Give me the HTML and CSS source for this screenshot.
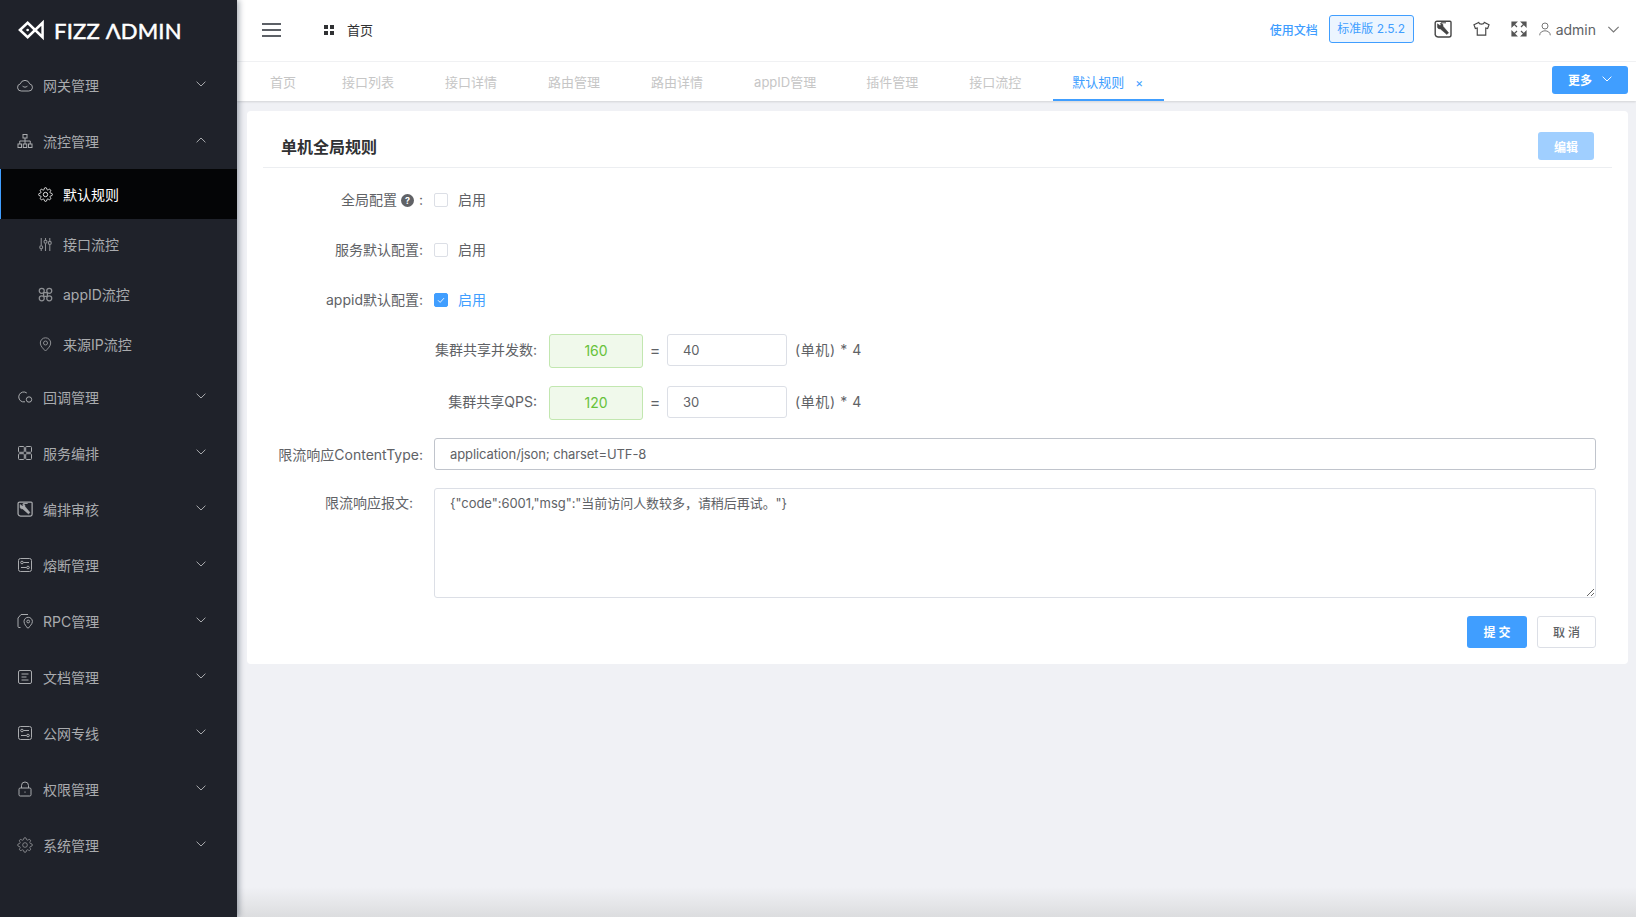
FILE: index.html
```html
<!DOCTYPE html>
<html lang="zh-CN">
  <head>
    <meta charset="utf-8">
    <title>Fizz Admin</title>
    <link rel="stylesheet" href="styles.css">
  </head>
  <body>
  <svg class="defs" width="0" height="0">
    <symbol id="i-down" viewBox="0 0 10 6"><path d="M.6.7 5 5 9.4.7"/></symbol>
    <symbol id="i-up" viewBox="0 0 10 6"><path d="M.6 5.3 5 1l4.4 4.3"/></symbol>
    <symbol id="i-cloud" viewBox="0 0 16 16"><path d="M4.2 14h7.6a3.6 3.6 0 0 0 .9-7.1A4.9 4.9 0 0 0 3.300 6.900 3.600 3.600 0 0 0 4.200 14z"/><path d="M5.500 8.800c.6 1.800 4.400 1.800 5 0"/></symbol>
    <symbol id="i-tree" viewBox="0 0 16 16"><rect x="6" y="1.500" width="4" height="3.500"/><rect x="1" y="11" width="3.500" height="3.500"/><rect x="6.250" y="11" width="3.500" height="3.500"/><rect x="11.500" y="11" width="3.500" height="3.500"/><path d="M8 5v6M2.750 11V8h10.500v3"/></symbol>
    <symbol id="i-gear" viewBox="0 0 24 24"><circle cx="12" cy="12" r="3.500"/><path d="M19.400 15a1.650 1.650 0 0 0 .33 1.820l.06.06a2 2 0 0 1 0 2.830 2 2 0 0 1-2.830 0l-.06-.06a1.650 1.650 0 0 0-1.820-.33 1.650 1.650 0 0 0-1 1.510V21a2 2 0 0 1-2 2 2 2 0 0 1-2-2v-.09A1.650 1.650 0 0 0 9 19.400a1.650 1.650 0 0 0-1.820.33l-.06.06a2 2 0 0 1-2.830 0 2 2 0 0 1 0-2.830l.06-.06a1.650 1.650 0 0 0 .33-1.820 1.650 1.650 0 0 0-1.510-1H3a2 2 0 0 1-2-2 2 2 0 0 1 2-2h.09A1.650 1.650 0 0 0 4.600 9a1.650 1.650 0 0 0-.33-1.820l-.06-.06a2 2 0 0 1 0-2.830 2 2 0 0 1 2.830 0l.06.06a1.650 1.650 0 0 0 1.820.33H9a1.650 1.650 0 0 0 1-1.510V3a2 2 0 0 1 2-2 2 2 0 0 1 2 2v.09a1.650 1.650 0 0 0 1 1.510 1.650 1.650 0 0 0 1.820-.33l.06-.06a2 2 0 0 1 2.830 0 2 2 0 0 1 0 2.830l-.06.06a1.650 1.650 0 0 0-.33 1.820V9a1.650 1.650 0 0 0 1.510 1H21a2 2 0 0 1 2 2 2 2 0 0 1-2 2h-.09a1.650 1.650 0 0 0-1.510 1z"/></symbol>
    <symbol id="i-sliders" viewBox="0 0 12 14"><path d="M2 1v7M2 11v2M6 1v2M6 6v7M10 1v3M10 7v6"/><circle cx="2" cy="9.500" r="1.400"/><circle cx="6" cy="4.500" r="1.400"/><circle cx="10" cy="5.500" r="1.400"/></symbol>
    <symbol id="i-cmd" viewBox="0 0 12 12"><circle cx="3" cy="3" r="2"/><circle cx="9" cy="3" r="2"/><circle cx="3" cy="9" r="2"/><circle cx="9" cy="9" r="2"/><path d="M4.500 4.500h3v3h-3z"/></symbol>
    <symbol id="i-pin" viewBox="0 0 12 15"><path d="M6 14C3.500 11.500 .8 9 .8 6a5.200 5.200 0 0 1 10.400 0C11.200 9 8.500 11.500 6 14z"/><circle cx="6" cy="6" r="2"/></symbol>
    <symbol id="i-callback" viewBox="0 0 16 16"><path d="M9.800 4A5 5 0 1 0 5.500 12.800H8"/><circle cx="12" cy="10.500" r="2.700"/></symbol>
    <symbol id="i-grid" viewBox="0 0 16 16"><rect x="1.500" y="1.500" width="5.800" height="5.800" rx="1"/><rect x="8.700" y="1.500" width="5.800" height="5.800" rx="1"/><rect x="1.500" y="8.700" width="5.800" height="5.800" rx="1"/><rect x="8.700" y="8.700" width="5.800" height="5.800" rx="1"/></symbol>
    <symbol id="i-audit" viewBox="0 0 18 18"><path d="M3 1.200h13a1 1 0 0 1 1 1V15a2 2 0 0 1-2 2H4a3 3 0 0 1-2.800-2.200V3a1.800 1.800 0 0 1 1.800-1.800z" stroke-width="1.400"/><path d="M7 2.800h5" stroke-width="1"/><path d="M3.400 3.800 6 5.600 7 4.800l-.7-1.500c1.800-.2 3 1 2.700 3l5.600 6.500-1.700 1.700-6.500-5.600c-2 .3-3.300-1-3-3z" fill="currentColor" stroke-width=".5"/></symbol>
    <symbol id="i-switch" viewBox="0 0 16 16"><rect x="1.500" y="1.500" width="13" height="13" rx="2"/><path d="M6.500 5.500H12M4 10.500h5.500"/><circle cx="5" cy="5.500" r="1.300"/><circle cx="11" cy="10.500" r="1.300"/></symbol>
    <symbol id="i-rpc" viewBox="0 0 16 16"><path d="M3.500 14.500H2a1 1 0 0 1-1-1V5l3-3.500h7"/><path d="M10.500 15c-1-1.500-3.500-3.800-3.500-6.500a4.200 4.200 0 0 1 8.400 0c0 2.700-3.100 5-3.900 6.500z"/><circle cx="11.200" cy="8.500" r="1.400"/></symbol>
    <symbol id="i-doc" viewBox="0 0 16 16"><rect x="1.500" y="1.500" width="13" height="13" rx="1.500"/><path d="M4.500 5h7M4.500 8h5M4.500 11h7"/></symbol>
    <symbol id="i-lock" viewBox="0 0 16 16"><rect x="2" y="7" width="12" height="8" rx="1.200"/><path d="M4.500 7V4.500a3.500 3.500 0 0 1 7 0V7M8 10.500v1.200"/></symbol>
    <symbol id="i-shirt" viewBox="0 0 18 16"><path d="M6 1 1 3.500l1.500 4L4.500 7v7.500h9V7l2 .5 1.500-4L12 1c-.5 2.500-5.500 2.500-6 0z"/></symbol>
    <symbol id="i-full" viewBox="0 0 16 16"><path d="M1 1h4.500L1 5.500zM2.500 2.500l3.500 3.500M15 1h-4.500L15 5.500zM13.500 2.500 10 6M1 15h4.500L1 10.500zM2.500 13.500 6 10M15 15h-4.500l4.500-4.500zM13.500 13.500 10 10"/></symbol>
    <symbol id="i-user" viewBox="0 0 12 14"><circle cx="6" cy="4" r="3"/><path d="M.7 13.300c0-6 10.600-6 10.600 0"/></symbol>
  </svg>

  <div class="app">
    <aside class="sidebar">
      <div class="logo">
        <svg class="logo_mark" viewBox="0 0 28 22"><path d="M2 11 10 3.500 25.500 18.500V3.500L10 18.500z" fill="none" stroke="#fff" stroke-width="2.600"/><circle cx="10" cy="11" r="1.400" fill="#fff"/></svg>
        <span class="logo_text">FIZZ ΛDMIN</span>
      </div>
      <div class="menu_group"><svg class="menu_icon"><use href="#i-cloud"/></svg><span>网关管理</span><svg class="menu_arrow"><use href="#i-down"/></svg></div>
      <div class="menu_group"><svg class="menu_icon"><use href="#i-tree"/></svg><span>流控管理</span><svg class="menu_arrow"><use href="#i-up"/></svg></div>
      <div class="menu_item menu_item__active"><svg class="sub_icon"><use href="#i-gear"/></svg><span>默认规则</span></div>
      <div class="menu_item"><svg class="sub_icon"><use href="#i-sliders"/></svg><span>接口流控</span></div>
      <div class="menu_item"><svg class="sub_icon"><use href="#i-cmd"/></svg><span>appID流控</span></div>
      <div class="menu_item"><svg class="sub_icon"><use href="#i-pin"/></svg><span>来源IP流控</span></div>
      <div class="menu_group"><svg class="menu_icon"><use href="#i-callback"/></svg><span>回调管理</span><svg class="menu_arrow"><use href="#i-down"/></svg></div>
      <div class="menu_group"><svg class="menu_icon"><use href="#i-grid"/></svg><span>服务编排</span><svg class="menu_arrow"><use href="#i-down"/></svg></div>
      <div class="menu_group"><svg class="menu_icon"><use href="#i-audit"/></svg><span>编排审核</span><svg class="menu_arrow"><use href="#i-down"/></svg></div>
      <div class="menu_group"><svg class="menu_icon"><use href="#i-switch"/></svg><span>熔断管理</span><svg class="menu_arrow"><use href="#i-down"/></svg></div>
      <div class="menu_group"><svg class="menu_icon"><use href="#i-rpc"/></svg><span>RPC管理</span><svg class="menu_arrow"><use href="#i-down"/></svg></div>
      <div class="menu_group"><svg class="menu_icon"><use href="#i-doc"/></svg><span>文档管理</span><svg class="menu_arrow"><use href="#i-down"/></svg></div>
      <div class="menu_group"><svg class="menu_icon"><use href="#i-switch"/></svg><span>公网专线</span><svg class="menu_arrow"><use href="#i-down"/></svg></div>
      <div class="menu_group"><svg class="menu_icon"><use href="#i-lock"/></svg><span>权限管理</span><svg class="menu_arrow"><use href="#i-down"/></svg></div>
      <div class="menu_group"><svg class="menu_icon"><use href="#i-gear"/></svg><span>系统管理</span><svg class="menu_arrow"><use href="#i-down"/></svg></div>
    </aside>

    <div class="main">
      <header class="topbar">
        <div class="hamburger"><i></i><i></i><i></i></div>
        <div class="crumb">
          <svg class="crumb_icon" viewBox="0 0 12 12"><path d="M1 1h4v4H1zM7 1h4v4H7zM1 7h4v4H1zM7 7h4v4H7z"/></svg>
          <span>首页</span>
        </div>
        <div class="topbar_right">
          <a class="doc_link">使用文档</a>
          <span class="version">标准版 2.5.2</span>
          <svg class="top_icon top_icon__audit"><use href="#i-audit"/></svg>
          <svg class="top_icon top_icon__shirt"><use href="#i-shirt"/></svg>
          <svg class="top_icon top_icon__full"><use href="#i-full"/></svg>
          <svg class="top_user"><use href="#i-user"/></svg>
          <span class="username">admin</span>
          <svg class="top_arrow"><use href="#i-down"/></svg>
        </div>
      </header>

      <nav class="tabs">
        <a class="tab tab__home">首页</a>
        <a class="tab">接口列表</a>
        <a class="tab">接口详情</a>
        <a class="tab">路由管理</a>
        <a class="tab">路由详情</a>
        <a class="tab tab__latin">appID管理</a>
        <a class="tab">插件管理</a>
        <a class="tab">接口流控</a>
        <a class="tab tab__active">默认规则<span class="tab_close">×</span></a>
        <button class="btn btn__primary btn__more">更多<svg class="more_arrow"><use href="#i-down"/></svg></button>
      </nav>

      <section class="card">
        <div class="card_head">
          <h2>单机全局规则</h2>
          <button class="btn btn__edit">编辑</button>
        </div>
        <form class="form">
          <div class="row row__check">
            <label class="row_label">全局配置 <span class="help">?</span> :</label>
            <span class="check"></span><span class="check_text">启用</span>
          </div>
          <div class="row row__check">
            <label class="row_label">服务默认配置:</label>
            <span class="check"></span><span class="check_text">启用</span>
          </div>
          <div class="row row__check">
            <label class="row_label">appid默认配置:</label>
            <span class="check check__on"><svg viewBox="0 0 14 14"><path d="M3.500 7.300 6 9.800l4.500-5"/></svg></span><span class="check_text check_text__on">启用</span>
          </div>
          <div class="row row__calc">
            <label class="row_label row_label__wide">集群共享并发数:</label>
            <span class="total">160</span>
            <span class="equals">=</span>
            <input class="input input__small" value="40">
            <span class="unit">(单机) * 4</span>
          </div>
          <div class="row row__calc">
            <label class="row_label row_label__wide">集群共享QPS:</label>
            <span class="total">120</span>
            <span class="equals">=</span>
            <input class="input input__small" value="30">
            <span class="unit">(单机) * 4</span>
          </div>
          <div class="row">
            <label class="row_label">限流响应ContentType:</label>
            <input class="input input__full input__dark" value="application/json; charset=UTF-8">
          </div>
          <div class="row row__area">
            <label class="row_label row_label__top">限流响应报文:</label>
            <textarea class="textarea">{"code":6001,"msg":"当前访问人数较多，请稍后再试。"}</textarea>
          </div>
          <div class="form_actions">
            <button type="button" class="btn btn__primary btn__submit">提 交</button>
            <button type="button" class="btn btn__cancel">取 消</button>
          </div>
        </form>
      </section>
    </div>
  </div>
</body>
</html>
```

FILE: styles.css
```css
html, body {
  margin: 0; padding: 0;
  height: 100%;
  overflow: hidden;
  font-family: Inter, "Noto Sans CJK SC", sans-serif;
  font-size: 14px;
  color: #606266;
}

.defs {
  position: absolute;
}

.app {
  display: flex;
  height: 100vh;
}

/* sidebar */
.sidebar {
  width: 237px;
  flex: none;
  background: #1f222a;
  color: #a9abae;
  box-shadow: 2px 0 6px rgba(0, 21, 41, 0.35);
  z-index: 2;
}

.logo {
  display: flex;
  align-items: center;
  height: 57px;
  padding: 3px 0 0 18px;
  box-sizing: border-box;
  color: #fff;
}
.logo_mark {
  width: 27px; height: 22px;
}
.logo_text {
  margin-left: 9px;
  font-family: Lato, sans-serif;
  font-size: 22px;
  font-weight: 400;
  letter-spacing: 0.2px;
  -webkit-text-stroke: 0.5px #fff;
}

.menu_group {
  display: flex;
  align-items: center;
  height: 56px;
  padding-left: 17px;
}
.menu_group span {
  margin-left: 10px;
}
.menu_icon {
  width: 16px; height: 16px;
  fill: none;
  stroke: currentColor;
  stroke-width: 1;
}
.menu_arrow {
  width: 10px; height: 6px;
  margin-left: auto;
  margin-right: 31px;
  margin-top: -3px;
  fill: none;
  stroke: currentColor;
}

.menu_item {
  display: flex;
  align-items: center;
  height: 50px;
  padding-left: 38px;
}
.menu_item span {
  margin-left: 10px;
}
.sub_icon {
  width: 15px; height: 15px;
  fill: none;
  stroke: #8d8f93;
  stroke-width: 1;
}
.menu_item__active {
  background: #040506;
  color: #fff;
  box-shadow: inset 1px 0 0 #409eff;
}
.menu_item__active .sub_icon {
  stroke: #e6e6e6;
  stroke-width: 1.600;
}

/* main column */
.main {
  flex: 1;
  min-width: 0;
  background: linear-gradient(to bottom, #f0f1f5 calc(100% - 30px), #dcdddf 100%);
}

.topbar {
  display: flex;
  align-items: center;
  height: 61px;
  background: #fff;
  border-bottom: 1px solid #f2f3f5;
  padding-left: 25px;
}
.hamburger {
  width: 19px;
  margin-top: -2px;
}
.hamburger i {
  display: block;
  height: 2px;
  background: #5c6066;
  margin-bottom: 4px;
}
.hamburger i:last-child {
  margin-bottom: 0;
}
.crumb {
  display: flex;
  align-items: center;
  margin-left: 42px;
  margin-top: -2px;
  font-size: 13px;
  color: #303133;
}
.crumb_icon {
  width: 12px; height: 12px;
  margin-right: 12px;
  fill: #303133;
}
.topbar_right {
  display: flex;
  align-items: center;
  margin-left: auto;
  margin-top: -3px;
}
.doc_link {
  font-size: 12px;
  font-weight: 500;
  color: #409eff;
}
.version {
  margin-left: 11px;
  width: 85px; height: 28px;
  box-sizing: border-box;
  line-height: 26px;
  text-align: center;
  font-size: 12px;
  color: #409eff;
  background: #ecf5ff;
  border: 1px solid #409eff;
  border-radius: 3px;
}
.top_icon {
  fill: none;
  stroke: #444;
  stroke-width: 1.200;
}
.top_icon__audit {
  width: 18px; height: 18px;
  margin-left: 20px;
  color: #444;
}
.top_icon__shirt {
  width: 17px; height: 16px;
  margin-left: 21px;
}
.top_icon__full {
  width: 16px; height: 16px;
  margin-left: 21px;
  fill: #555;
  stroke: #555;
}
.top_user {
  width: 12px; height: 14px;
  margin-left: 12px;
  fill: none;
  stroke: #777;
}
.username {
  margin-left: 5px;
  color: #606266;
}
.top_arrow {
  width: 13px; height: 7px;
  margin-left: 11px;
  margin-right: 16px;
  fill: none;
  stroke: #777;
}

.tabs {
  display: flex;
  align-items: flex-start;
  height: 39px;
  background: #fff;
  box-shadow: 0 1px 2px rgba(0, 0, 0, 0.12);
  padding-left: 33px;
  position: relative;
}
.tab {
  height: 39px;
  line-height: 40px;
  box-sizing: border-box;
  font-size: 13px;
  color: #c6c6c6;
  margin-right: 51px;
}
.tab__home {
  margin-right: 46px;
}
.tab__latin {
  margin-right: 50px;
}
.tab__active {
  margin-left: -19px;
  padding: 0 18px 0 19px;
  color: #409eff;
  border-bottom: 2px solid #409eff;
  margin-right: 0;
}
.tab_close {
  margin-left: 11px;
  font-size: 12px;
  margin-right: 3px;
}
.btn {
  border: 0;
  font-family: inherit;
  border-radius: 3px;
}
.btn__primary {
  background: #409eff;
  color: #fff;
  font-weight: 600;
}
.btn__more {
  display: flex;
  align-items: center;
  justify-content: center;
  width: 76px; height: 28px;
  margin: 4px 8px 0 auto;
  padding: 0 0 2px;
  font-size: 12px;
}
.more_arrow {
  width: 10px; height: 6px;
  margin-left: 10px;
  fill: none;
  stroke: #fff;
}

.card {
  margin: 10px 8px 0 10px;
  background: #fff;
  border-radius: 4px;
  padding-bottom: 16px;
}
.card_head {
  display: flex;
  align-items: center;
  justify-content: space-between;
  height: 42px;
  margin: 0 16px;
  padding: 14px 18px 0;
  border-bottom: 1px solid #eceef1;
}
.card_head h2 {
  margin: 0;
  font-size: 16px;
  font-weight: 600;
  color: #303133;
}
.btn__edit {
  width: 56px; height: 28px;
  background: #a0cfff;
  color: #fff;
  font-size: 12px;
  font-weight: 600;
}

.form {
  padding: 16px 32px 0 16px;
}
.row {
  display: flex;
  align-items: center;
  min-height: 32px;
  margin-bottom: 18px;
}
.row__check .row_label, .check_text {
  padding-bottom: 3px;
}
.row__calc {
  min-height: 34px;
  align-items: flex-start;
}
.row__area {
  align-items: flex-start;
}
.row_label {
  flex: none;
  width: 160px;
  margin-right: 11px;
  text-align: right;
  white-space: nowrap;
}
.row_label__wide {
  width: 274px;
  margin-right: 12px;
  line-height: 32px;
}
.row_label__top {
  padding-top: 4px;
  padding-right: 10px;
  width: 150px;
}
.help {
  display: inline-block;
  width: 13px; height: 13px;
  line-height: 13px;
  margin-right: 1px;
  border-radius: 50%;
  background: #606266;
  color: #fff;
  font-size: 9px;
  font-weight: 700;
  text-align: center;
  vertical-align: 1px;
}
.check {
  width: 14px; height: 14px;
  box-sizing: border-box;
  border: 1px solid #dcdfe6;
  border-radius: 2px;
  background: #fff;
}
.check__on {
  background: #409eff;
  border-color: #409eff;
}
.check__on svg {
  display: block;
  width: 12px; height: 12px;
  fill: none;
  stroke: #fff;
}
.check_text {
  margin-left: 10px;
}
.check_text__on {
  color: #409eff;
}
.total {
  width: 94px; height: 34px;
  box-sizing: border-box;
  line-height: 32px;
  text-align: center;
  color: #67c23a;
  background: #f0f9eb;
  border: 1px solid #c2e7b0;
  border-radius: 3px;
}
.equals {
  width: 24px;
  line-height: 32px;
  text-align: center;
  font-size: 16px;
}
.input {
  height: 32px;
  box-sizing: border-box;
  padding: 0 15px;
  font-family: inherit;
  font-size: 13px;
  letter-spacing: -0.1px;
  color: #606266;
  border: 1px solid #dcdfe6;
  border-radius: 3px;
  outline: none;
}
.input__small {
  width: 120px;
}
.input__full {
  flex: 1;
  min-width: 0;
}
.input__dark {
  border-color: #c0c4cc;
}
.unit {
  margin-left: 8px;
  line-height: 32px;
  white-space: pre;
  letter-spacing: 0.6px;
}
.textarea {
  flex: 1;
  display: block;
  height: 110px;
  box-sizing: border-box;
  padding: 4px 15px;
  font-family: inherit;
  font-size: 13px;
  letter-spacing: -0.05px;
  line-height: 20px;
  color: #606266;
  border: 1px solid #dcdfe6;
  border-radius: 3px;
  outline: none;
}
.form_actions {
  display: flex;
  justify-content: flex-end;
  gap: 10px;
}
.btn__submit {
  width: 60px; height: 32px;
  padding: 0 0 2px;
  font-size: 12px;
}
.btn__cancel {
  width: 59px; height: 32px;
  box-sizing: border-box;
  padding: 0 0 2px;
  background: #fff;
  border: 1px solid #dcdfe6;
  color: #606266;
  font-size: 12px;
  font-weight: 500;
}
```
